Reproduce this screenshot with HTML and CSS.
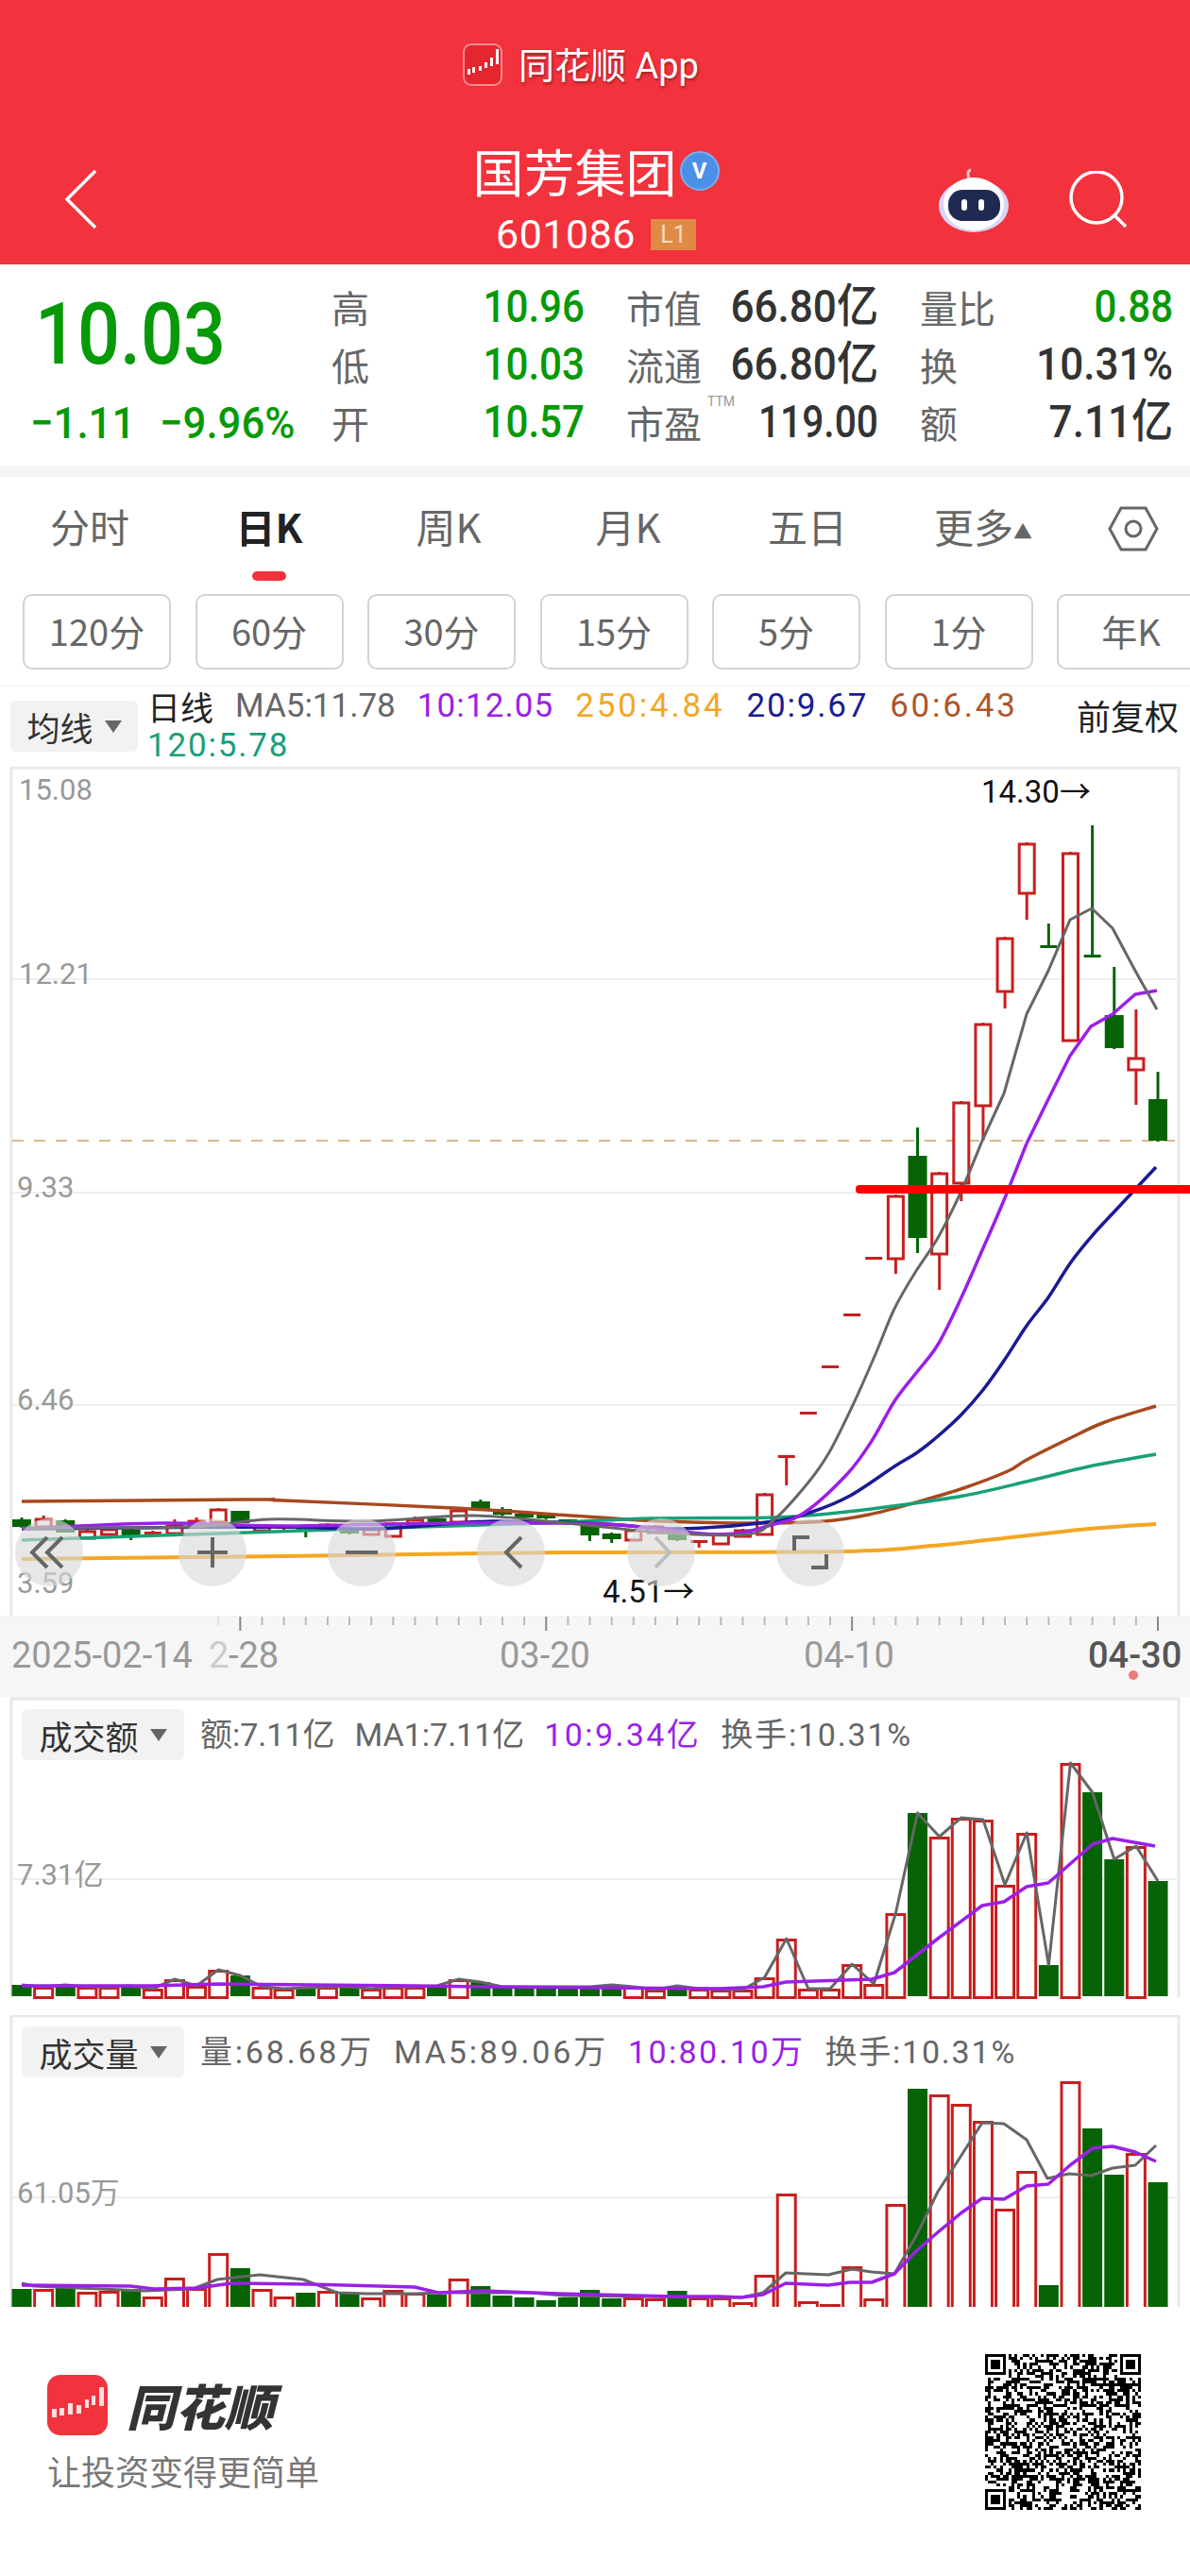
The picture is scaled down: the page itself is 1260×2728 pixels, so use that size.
FILE: index.html
```html
<!DOCTYPE html>
<html lang="zh-CN">
<head>
<meta charset="utf-8">
<title>国芳集团 601086</title>
<link rel="stylesheet" href="styles.css">
</head>
<body>
<div class="page">
  <header class="hdr">
    <div class="brand">
      <svg class="brand-logo" viewBox="0 0 42 45"><rect x="1" y="1" width="40" height="43" rx="8" fill="#e4262f" stroke="#f78a8f" stroke-width="2"/><g fill="#fff"><rect x="5" y="27" width="3" height="6"/><rect x="10" y="25" width="3" height="6"/><rect x="17" y="24" width="3" height="5"/><rect x="23" y="20" width="3" height="6"/><rect x="29" y="15" width="3" height="9"/><rect x="35" y="6" width="3" height="16"/></g></svg>
      <span>同花顺 App</span>
    </div>
    <div class="nav">
      <svg class="back" viewBox="0 0 36 64"><path d="M33 2 3 32l30 30" fill="none" stroke="#fff" stroke-width="3.5"/></svg>
      <div class="title">
        <div class="name"><span>国芳集团</span><i class="vbadge">V</i></div>
        <div class="code"><span>601086</span><b class="level">L1</b></div>
      </div>
      <div class="nav-r">
        <svg class="robot" viewBox="0 0 74 68"><path d="M33 12c-3-4-3-9 1-10" fill="none" stroke="#f6c6d4" stroke-width="3"/><ellipse cx="37" cy="40" rx="37" ry="28" fill="#d8d6f6"/><ellipse cx="37" cy="38" rx="32" ry="28" fill="#fff"/><rect x="10" y="23" width="55" height="33" rx="15" fill="#1f2a52"/><rect x="24" y="33" width="6" height="12" rx="3" fill="#fff"/><rect x="42" y="33" width="6" height="12" rx="3" fill="#fff"/></svg>
        <svg class="search" viewBox="0 0 62 60"><circle cx="29" cy="28" r="27" fill="none" stroke="#fff" stroke-width="3.5"/><path d="M47 46l13 13" stroke="#fff" stroke-width="3.5"/></svg>
      </div>
    </div>
  </header>

  <section class="info">
    <div class="quote">
      <div class="price"><span class="sq sq-l">10.03</span></div>
      <div class="chg"><span class="sq sq-l">−1.11</span><span class="sq sq-l">−9.96%</span></div>
    </div>
    <div class="stats">
      <div class="cell"><span class="lb">高</span><span class="val sq green">10.96</span></div>
      <div class="cell"><span class="lb">市值</span><span class="val sq">66.80亿</span></div>
      <div class="cell"><span class="lb">量比</span><span class="val sq green">0.88</span></div>
      <div class="cell"><span class="lb">低</span><span class="val sq green">10.03</span></div>
      <div class="cell"><span class="lb">流通</span><span class="val sq">66.80亿</span></div>
      <div class="cell"><span class="lb">换</span><span class="val sq">10.31%</span></div>
      <div class="cell"><span class="lb">开</span><span class="val sq green">10.57</span></div>
      <div class="cell"><span class="lb lb-ttm">市盈<sup>TTM</sup></span><span class="val sq val-pe">119.00</span></div>
      <div class="cell"><span class="lb">额</span><span class="val sq">7.11亿</span></div>
    </div>
  </section>
  <div class="band"></div>

  <nav class="tabs">
    <span class="tab">分时</span>
    <span class="tab tab-on">日K</span>
    <span class="tab">周K</span>
    <span class="tab">月K</span>
    <span class="tab">五日</span>
    <span class="tab tab-more">更多<em class="up">▲</em></span>
    <svg class="hex" viewBox="0 0 54 48"><path d="M14 2h26l12 22-12 22H14L2 24z" fill="none" stroke="#666" stroke-width="3"/><circle cx="27" cy="24" r="8" fill="none" stroke="#666" stroke-width="3"/></svg>
  </nav>

  <div class="periods">
    <span class="pbtn">120分</span><span class="pbtn">60分</span><span class="pbtn">30分</span><span class="pbtn">15分</span><span class="pbtn">5分</span><span class="pbtn">1分</span><span class="pbtn">年K</span>
  </div>

  <div class="legend">
    <div class="drop drop-ma">均线<i class="tri"></i></div>
    <div class="ma-list">
      <span class="ink">日线</span>
      <span class="c-gray">MA5:11.78</span>
      <span class="c-purple sp-1">10:12.05</span>
      <span class="c-orange sp-3">250:4.84</span>
      <span class="c-navy sp-2">20:9.67</span>
      <span class="c-brown sp-3">60:6.43</span>
      <span class="c-teal sp-2">120:5.78</span>
    </div>
    <div class="adj">前复权</div>
  </div>

  <div class="kline">
    <svg id="kchart" class="chart" width="1260" height="985" viewBox="0 811 1260 985"></svg>
  </div>

  <section class="panel panel-amt">
    <svg id="amt" class="chart" width="1260" height="337" viewBox="0 1796 1260 337"></svg>
    <div class="phead">
      <div class="drop">成交额<i class="tri"></i></div>
      <span class="c-gray">额:7.11亿</span>
      <span class="c-gray">MA1:7.11亿</span>
      <span class="c-purple sp-25">10:9.34亿</span>
      <span class="c-gray sp-2">换手:10.31%</span>
    </div>
  </section>

  <section class="panel panel-vol">
    <svg id="vol" class="chart" width="1260" height="309" viewBox="0 2133 1260 309"></svg>
    <div class="phead">
      <div class="drop">成交量<i class="tri"></i></div>
      <span class="c-gray sp-3">量:68.68万</span>
      <span class="c-gray sp-3">MA5:89.06万</span>
      <span class="c-purple sp-25">10:80.10万</span>
      <span class="c-gray sp-2">换手:10.31%</span>
    </div>
  </section>

  <footer class="foot">
    <div class="foot-l">
      <div class="foot-brand">
        <svg class="foot-logo" viewBox="0 0 64 64"><rect width="64" height="64" rx="14" fill="#f0333d"/><g fill="#fff" opacity=".85"><rect x="5" y="36" width="5" height="9"/><rect x="13" y="35" width="5" height="8"/><rect x="22" y="30" width="5" height="12"/><rect x="31" y="32" width="5" height="9"/><rect x="40" y="26" width="4" height="9"/><rect x="47" y="22" width="4" height="10"/><rect x="55" y="13" width="5" height="20"/></g></svg>
        <span class="foot-name">同花顺</span>
      </div>
      <div class="slogan">让投资变得更简单</div>
    </div>
    <svg id="qr" class="qr" viewBox="0 0 53 53" shape-rendering="crispEdges"></svg>
  </footer>
</div>
<script src="script.js"></script>
</body>
</html>
```
FILE: styles.css
```css
* { box-sizing: border-box; }
html, body { margin: 0; padding: 0; background: #fff; }
body { font-family: "Roboto", "Noto Sans CJK SC", sans-serif; color: #333; }
.page { width: 1260px; height: 2728px; overflow: hidden; display: flex; flex-direction: column; }

/* header */
.hdr { height: 280px; flex: none; background: #f2323c; color: #fff; padding-top: 46px; display: flex; flex-direction: column; align-items: center; }
.brand { height: 45px; display: flex; align-items: center; gap: 17px; font-size: 38px; margin-right: 30px; text-shadow: 1px 2px 3px rgba(90,20,20,.55); }
.brand span { margin-top: -4px; }
.brand-logo { width: 42px; height: 45px; }
.nav { margin-top: 66px; width: 100%; height: 108px; padding: 0 66px 0 68px; display: grid; grid-template-columns: 1fr auto 1fr; align-items: center; }
.back { width: 36px; height: 64px; }
.title { display: flex; flex-direction: column; align-items: center; }
.name { display: flex; align-items: center; gap: 3px; font-size: 54px; line-height: 52px; height: 52px; margin-top: -3px; font-family: "Noto Sans CJK SC", sans-serif; }
.vbadge { width: 42px; height: 42px; border-radius: 50%; background: #4c8fe6; color: #fff; font: 700 24px/38px "Roboto", sans-serif; text-align: center; border: 2px solid #7ab0ee; }
.code { margin-top: 25px; height: 33px; display: flex; align-items: center; gap: 16px; font-size: 43px; letter-spacing: .5px; }
.level { width: 48px; height: 33px; background: #e08a45; color: #f8dcc0; font: 400 25px/33px "Roboto", sans-serif; text-align: center; letter-spacing: 0; }
.nav-r { display: flex; align-items: center; justify-content: flex-end; gap: 64px; }
.robot { width: 74px; height: 68px; margin-top: 2px; }
.search { width: 62px; height: 60px; }

/* quote */
.info { height: 213px; flex: none; display: flex; }
.quote { width: 351px; padding: 21px 0 0 34px; color: #079907; }
.sq { display: inline-block; transform: scaleX(.87); white-space: nowrap; font-weight: 500; }
.sq-l { transform-origin: left center; }
.price { font-size: 91px; line-height: 106px; height: 106px; margin-left: 3px; }
.chg { margin-top: 16px; font-size: 47px; line-height: 50px; display: flex; gap: 31px; width: 320px; margin-left: -2px; }
.chg .sq { width: 106px; flex: none; transform: scaleX(.93); }
.stats { width: 891px; padding-top: 14px; display: grid; grid-template-columns: 268px 267px 268px; grid-auto-rows: 61px; column-gap: 44px; }
.cell { display: flex; align-items: center; justify-content: space-between; }
.lb { font: 400 40px/1 "Noto Sans CJK SC", sans-serif; color: #666; white-space: nowrap; }
.lb-ttm { position: relative; }
.lb-ttm sup { position: absolute; left: 86px; top: -9px; font: 400 14px/1 "Roboto", sans-serif; color: #999; }
.val { font-size: 49px; line-height: 1; color: #333; transform-origin: right center; transform: scaleX(.9); }
.val.green { color: #079907; transform: scaleX(.86); }
.val.val-pe { transform: scaleX(.83); }
.band { height: 12px; flex: none; background: #f4f4f4; }

/* tabs */
.tabs { height: 109px; flex: none; position: relative; display: flex; align-items: flex-start; padding: 31px 0 0 0; font: 400 42px/42px "Noto Sans CJK SC", sans-serif; color: #666; }
.tab { width: 190px; text-align: center; flex: none; font-family: "Noto Sans CJK SC", sans-serif; }
.tab-more { margin-left: -4px; }
.tab-on { color: #222; font-weight: 700; position: relative; }
.tab-on::after { content: ""; position: absolute; left: 77px; top: 69px; width: 36px; height: 10px; border-radius: 5px; background: #f2323c; }
.up { font-style: normal; font-size: 20px; vertical-align: 4px; }
.hex { width: 54px; height: 48px; position: absolute; left: 1173px; top: 31px; }

.periods { display: flex; gap: 25.5px; margin-top: 15px; padding-left: 24px; height: 80px; flex: none; width: 1400px; }
.pbtn { width: 157px; height: 80px; flex: none; border: 2px solid #d2d2d2; border-radius: 10px; display: flex; align-items: center; justify-content: center; padding-bottom: 2px; font: 400 38px/1 "Noto Sans CJK SC", sans-serif; color: #666; }

/* legend */
.legend { margin-top: 17px; height: 86px; flex: none; display: flex; border-top: 1px solid #eee; padding-left: 11px; position: relative; }
.drop { width: 135px; height: 54px; background: #f2f2f2; border-radius: 6px; display: flex; align-items: center; justify-content: center; gap: 12px; font: 400 35px/1 "Noto Sans CJK SC", sans-serif; color: #333; flex: none; }
.drop-ma { margin-top: 15px; }
.tri { width: 0; height: 0; border-left: 9px solid transparent; border-right: 9px solid transparent; border-top: 13px solid #666; }
.ma-list { margin-left: 10px; width: 974px; display: flex; flex-wrap: wrap; column-gap: 23px; font-size: 35px; line-height: 42px; align-content: flex-start; }
.adj { margin-left: 10px; margin-top: 9px; font: 400 36px/1.2 "Noto Sans CJK SC", sans-serif; color: #222; white-space: nowrap; }
.ink { color: #222; font-family: "Noto Sans CJK SC", sans-serif; }
.c-gray { color: #666; }
.c-purple { color: #9b1fe8; }
.c-orange { color: #f5a623; }
.c-navy { color: #1a1a96; }
.c-brown { color: #b0552a; }
.c-teal { color: #17a078; }
.sp-1 { letter-spacing: 1.1px; }
.sp-2 { letter-spacing: 1.8px; }
.sp-25 { letter-spacing: 2.4px; }
.sp-3 { letter-spacing: 2.8px; }

/* charts */
.kline { height: 985px; flex: none; }
.chart { display: block; font-family: "Roboto", "Noto Sans CJK SC", sans-serif; }
.axis-lb { font-size: 31px; fill: #999; }
.mark-lb { font-size: 33px; fill: #111; }
.date-lb { font-size: 38px; fill: #999; }
.date-end { font-size: 38px; fill: #555; font-weight: 500; }
.date-fade { font-size: 38px; fill: #ccc; }

.panel { position: relative; flex: none; overflow: hidden; }
.panel-amt { height: 337px; }
.panel-vol { height: 309px; }
.phead { position: absolute; left: 23px; top: 13px; display: flex; align-items: center; font-size: 34px; line-height: 54px; white-space: nowrap; }
.panel-vol .phead { top: 12px; }
.phead .drop { width: 172px; margin-right: 17px; }
.phead span { margin-right: 21px; }

/* footer */
.foot { flex: 1; background: #fff; display: flex; align-items: center; justify-content: space-between; padding: 0 52px 20px 50px; position: relative; }
.foot-brand { display: flex; align-items: center; gap: 20px; }
.foot-logo { width: 64px; height: 64px; }
.foot-name { font: italic 900 52px/1 "Noto Sans CJK SC", sans-serif; color: #333; }
.slogan { margin-top: 18px; font: 400 36px/1.1 "Noto Sans CJK SC", sans-serif; color: #777; }
.qr { width: 165px; height: 165px; }
```
FILE: script.js
```js
var NS = "http://www.w3.org/2000/svg";
var GREEN = "#056305", RED = "#c81e1e";
function X(i) { return 23 + i * 23.135; }
function el(parent, tag, attrs, text) {
  var n = document.createElementNS(NS, tag);
  for (var k in attrs) n.setAttribute(k, attrs[k]);
  if (text) n.textContent = text;
  parent.appendChild(n);
  return n;
}
function line(p, pts, color, w) {
  el(p, "polyline", { points: pts.map(function (q) { return q.join(","); }).join(" "), fill: "none", stroke: color, "stroke-width": w || 3, "stroke-linejoin": "round" });
}
/* Catmull-Rom spline through the points, for the moving averages */
function curve(p, pts, color, w) {
  var d = "M" + pts[0][0] + " " + pts[0][1];
  for (var i = 0; i < pts.length - 1; i++) {
    var a = pts[i - 1] || pts[i], b = pts[i], c = pts[i + 1], e = pts[i + 2] || c;
    d += "C" + (b[0] + (c[0] - a[0]) / 6).toFixed(1) + " " + (b[1] + (c[1] - a[1]) / 6).toFixed(1) + " " +
      (c[0] - (e[0] - b[0]) / 6).toFixed(1) + " " + (c[1] - (e[1] - b[1]) / 6).toFixed(1) + " " + c[0] + " " + c[1];
  }
  el(p, "path", { d: d, fill: "none", stroke: color, "stroke-width": w || 3 });
}
function frame(p, x0, y0, x1, y1) {
  el(p, "path", { d: "M" + x0 + " " + y1 + "V" + y0 + "H" + x1 + "V" + y1, fill: "none", stroke: "#e8e8e8", "stroke-width": 3 });
}
function hline(p, y) { el(p, "rect", { x: 12, y: y, width: 1236, height: 2, fill: "#eeeeee" }); }

var greens = { 0:1,2:1,5:1,10:1,13:1,15:1,19:1,21:1,22:1,23:1,24:1,25:1,26:1,27:1,30:1,41:1,47:1,49:1,50:1,52:1 };

/* [bodyTop, bodyBottom, wickTop, wickBottom] */
var candles = [
 [1608,1616,1606,1617],[1607,1615,1604,1617],[1609,1622,1608,1622],[1620,1627,1618,1628],[1618,1623,1616,1624],
 [1619,1625,1618,1630],[1621,1624,1620,1625],[1614,1622,1608,1623],[1609,1615,1606,1616],[1597,1610,1596,1611],
 [1599,1612,1599,1612],[1615,1619,1614,1620],[1615,1618,1614,1619],[1615,1619,1614,1627],[1613,1617,1612,1618],
 [1617,1623,1616,1624],[1618,1623,1617,1625],[1612,1625,1611,1626],[1608,1613,1605,1614],[1607,1613,1606,1614],
 [1598,1610,1598,1611],[1589,1597,1587,1598],[1597,1603,1595,1604],[1602,1606,1601,1607],[1603,1607,1603,1608],
 [1608,1613,1608,1614],[1613,1625,1612,1631],[1623,1629,1622,1633],[1619,1629,1618,1630],[1615,1621,1614,1622],
 [1617,1630,1616,1631],[1630,1633,1630,1638],[1623,1633,1622,1634],[1619,1625,1618,1626],[1581,1623,1580,1624],
 [1540,1542,1540,1572],[1494,1497,1494,1497],[1445,1447,1445,1447],[1390,1392,1390,1392],[1330,1333,1330,1333],
 [1265,1331,1264,1348],[1223,1310,1193,1326],[1241,1326,1240,1365],[1166,1251,1165,1271],[1083,1169,1082,1207],
 [992,1048,991,1067],[892,944,891,973],[1000,1002,977,1002],[902,1100,901,1101],[1010,1012,873,1012],
 [1074,1109,1023,1110],[1119,1131,1068,1169],[1163,1207,1134,1208]
];

var amtTop = [2101,2103,2101,2103,2103,2102,2105,2095,2102,2085,2091,2103,2105,2104,2103,2103,2105,2103,2103,2102,2095,2098,2103,2103,2103,2103,2103,2101,2103,2106,2102,2105,2106,2106,2093,2052,2105,2105,2079,2100,2025,1919,1944,1924,1926,1995,1940,2080,1866,1897,1968,1954,1991];
var volTop = [2423,2423,2422,2426,2425,2423,2431,2411,2422,2385,2401,2423,2431,2427,2425,2428,2432,2424,2427,2429,2412,2420,2430,2432,2435,2432,2424,2433,2432,2433,2425,2432,2432,2437,2408,2322,2436,2439,2399,2433,2333,2211,2217,2227,2245,2338,2298,2419,2203,2253,2302,2279,2310];

function bars(p, tops, bottom) {
  tops.forEach(function (t, i) {
    var x = X(i);
    if (greens[i]) el(p, "rect", { x: x - 10.5, y: t, width: 21, height: bottom - t, fill: GREEN });
    else el(p, "rect", { x: x - 9.5, y: t + 1.5, width: 19, height: bottom - t, fill: "#fff", stroke: RED, "stroke-width": 3 });
  });
}

/* K-line */
(function () {
  var s = document.getElementById("kchart");
  el(s, "rect", { x: 0, y: 1710, width: 1260, height: 86, fill: "#f6f6f6" });
  frame(s, 12, 812, 1248, 1711);
  hline(s, 1035); hline(s, 1261); hline(s, 1486);
  el(s, "line", { x1: 13, x2: 1246, y1: 1207, y2: 1207, stroke: "#d9b98a", "stroke-width": 2, "stroke-dasharray": "12 11" });

  candles.forEach(function (c, i) {
    var x = X(i), col = greens[i] ? GREEN : RED;
    el(s, "line", { x1: x, x2: x, y1: c[2], y2: c[3], stroke: col, "stroke-width": 3 });
    if (c[1] - c[0] <= 3) el(s, "rect", { x: x - 9, y: c[0], width: 18, height: 3, fill: col });
    else if (greens[i]) el(s, "rect", { x: x - 10, y: c[0], width: 20, height: c[1] - c[0], fill: col });
    else el(s, "rect", { x: x - 8, y: c[0] + 1, width: 16, height: c[1] - c[0], fill: "#fff", stroke: col, "stroke-width": 3 });
  });

  curve(s, [[23,1650],[300,1647],[600,1643],[893,1642],[987,1636],[1053,1629],[1153,1618],[1224,1613]], "#f5a623", 4);
  curve(s, [[23,1589],[270,1587],[300,1588],[480,1596],[620,1605],[700,1610],[800,1612],[873,1610],[920,1603],[970,1590],[1020,1575],[1067,1557],[1087,1545],[1133,1522],[1170,1505],[1224,1488]], "#a8481e", 3.5);
  curve(s, [[23,1630],[320,1620],[574,1612],[689,1607],[820,1606],[887,1601],[953,1593],[1020,1583],[1087,1568],[1153,1552],[1224,1539]], "#17a078", 3.5);
  curve(s, [[23,1618],[140,1617],[300,1616],[400,1618],[520,1610],[640,1613],[720,1618],[820,1610],[860,1600],[900,1583],[947,1552],[970,1538],[993,1520],[1017,1498],[1040,1472],[1063,1440],[1087,1403],[1110,1373],[1133,1337],[1157,1307],[1180,1282],[1224,1235]], "#1a1a96", 3.5);
  curve(s, [[23,1618],[170,1612],[300,1615],[480,1612],[640,1613],[760,1624],[820,1613],[853,1600],[897,1560],[923,1525],[947,1483],[970,1453],[993,1423],[1017,1375],[1040,1323],[1063,1270],[1087,1210]], "#9b1fe8", 3.5);
  line(s, [[1087,1210],[1110,1163],[1133,1117],[1155,1086],[1178,1073],[1202,1052],[1225,1048]], "#9b1fe8", 3.5);
  curve(s, [[23,1617],[200,1616],[285,1608],[390,1610],[500,1604],[600,1612],[700,1622],[790,1624],[820,1608],[855,1570],[878,1537],[903,1487],[927,1433],[947,1385],[970,1345],[993,1310],[1017,1262],[1040,1207]], "#666", 3);
  line(s, [[1040,1207],[1063,1157],[1087,1073],[1110,1027],[1133,973],[1156,961],[1178,982],[1202,1027],[1225,1068]], "#666", 3);

  el(s, "rect", { x: 906, y: 1254, width: 360, height: 9, rx: 4, fill: "#ff0000" });

  [[20,846,"15.08"],[20,1041,"12.21"],[18,1267,"9.33"],[18,1492,"6.46"],[18,1686,"3.59"]].forEach(function (a) {
    el(s, "text", { x: a[0], y: a[1], "class": "axis-lb" }, a[2]);
  });
  el(s, "text", { x: 1039, y: 849, "class": "mark-lb" }, "14.30→");
  el(s, "text", { x: 638, y: 1696, "class": "mark-lb" }, "4.51→");

  for (var i = 9; i <= 52; i++) {
    var x = X(i), long = (i - 10) % 14 === 0;
    el(s, "line", { x1: x, x2: x, y1: 1711, y2: long ? 1726 : 1720, stroke: long ? "#888" : "#bbb", "stroke-width": 2, opacity: i === 9 ? .4 : 1 });
  }
  el(s, "text", { x: 221, y: 1765, "class": "date-fade" }, "2");
  el(s, "text", { x: 12, y: 1765, "class": "date-lb" }, "2025-02-14");
  el(s, "text", { x: 242, y: 1765, "class": "date-lb" }, "-28");
  el(s, "text", { x: 529, y: 1765, "class": "date-lb" }, "03-20");
  el(s, "text", { x: 851, y: 1765, "class": "date-lb" }, "04-10");
  el(s, "text", { x: 1152, y: 1765, "class": "date-end" }, "04-30");
  el(s, "circle", { cx: 1200, cy: 1773, r: 5, fill: "#f07a7a" });

  var cy = 1643;
  [52,225,383,541,700,858].forEach(function (cx) {
    el(s, "circle", { cx: cx, cy: cy, r: 36, fill: "#d8d8d8", opacity: .62 });
  });
  function icon(d, col) { el(s, "path", { d: d, fill: "none", stroke: col || "#666", "stroke-width": 4 }); }
  icon("M50 1627 34 1643l16 16M66 1627 50 1643l16 16");
  icon("M225 1627v32M209 1643h32");
  icon("M366 1643h34");
  icon("M552 1627 536 1643l16 16");
  icon("M694 1627l15 16-15 16", "#bdbdbd");
  icon("M857 1627h-16v14M859 1659h16v-14");
})();

/* amount */
(function () {
  var s = document.getElementById("amt");
  frame(s, 12, 1798, 1248, 2114);
  hline(s, 1988);
  bars(s, amtTop, 2113);
  line(s, amtTop.map(function (t, i) { return [X(i), t]; }), "#666", 3);
  line(s, [[23,2102],[160,2102],[230,2100],[330,2101],[440,2102],[510,2103],[760,2105],[808,2103],[832,2098],[923,2095],[947,2088],[993,2052],[1040,2017],[1063,2013],[1087,1997],[1110,1993],[1157,1952],[1178,1946],[1223,1954]], "#9b1fe8", 3.5);
  el(s, "text", { x: 18, y: 1995, "class": "axis-lb" }, "7.31亿");
})();

/* volume */
(function () {
  var s = document.getElementById("vol");
  frame(s, 12, 2134, 1248, 2445);
  hline(s, 2325);
  bars(s, volTop, 2450);
  line(s, [[23,2417],[36,2420],[82,2422],[153,2425],[204,2423],[230,2413],[275,2408],[321,2413],[357,2427],[388,2428],[439,2428],[469,2427],[561,2427],[597,2430],[760,2432],[785,2432],[808,2427],[832,2406],[877,2408],[902,2402],[923,2405],[947,2407],[970,2367],[993,2320],[1017,2283],[1040,2247],[1063,2248],[1087,2265],[1109,2306],[1132,2301],[1155,2303],[1178,2295],[1202,2292],[1224,2271]], "#666", 3);
  line(s, [[23,2419],[138,2420],[163,2423],[209,2422],[245,2417],[327,2418],[439,2421],[464,2427],[510,2425],[592,2428],[714,2431],[760,2431],[785,2432],[808,2429],[832,2417],[877,2419],[900,2416],[923,2416],[947,2407],[970,2383],[993,2363],[1017,2343],[1040,2327],[1063,2328],[1087,2314],[1110,2312],[1133,2292],[1157,2274],[1178,2272],[1202,2278],[1224,2288]], "#9b1fe8", 3.5);
  el(s, "text", { x: 18, y: 2332, "class": "axis-lb" }, "61.05万");
})();

/* QR-style pattern */
(function () {
  var s = document.getElementById("qr"), n = 53, seed = 20250430;
  function rnd() { seed = (seed * 1103515245 + 12345) & 0x7fffffff; return (seed >> 16) & 1; }
  function inFinder(x, y) { return (x < 8 && y < 8) || (x >= n - 8 && y < 8) || (x < 8 && y >= n - 8); }
  var d = "";
  for (var y = 0; y < n; y++) for (var x = 0; x < n; x++) {
    if (!inFinder(x, y) && rnd()) d += "M" + x + " " + y + "h1v1h-1z";
  }
  [[0,0],[n-7,0],[0,n-7]].forEach(function (o) {
    d += "M" + o[0] + " " + o[1] + "h7v7h-7zM" + (o[0]+1) + " " + (o[1]+1) + "v5h5v-5z";
    d += "M" + (o[0]+2) + " " + (o[1]+2) + "h3v3h-3z";
  });
  el(s, "path", { d: d, fill: "#000", "fill-rule": "evenodd" });
})();
```
